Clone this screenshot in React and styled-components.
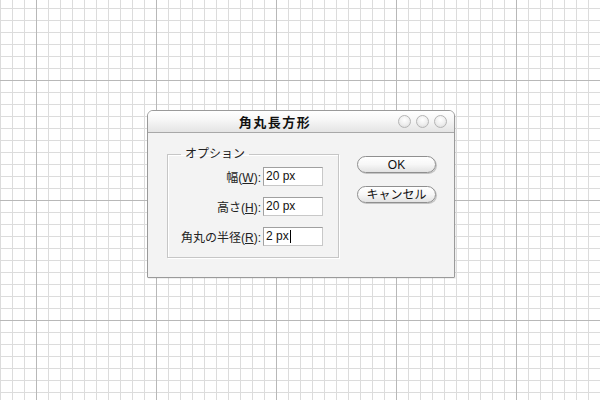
import React from "react";
import styled, { createGlobalStyle } from "styled-components";

const GlobalStyle = createGlobalStyle`
  html, body {
    margin: 0;
    padding: 0;
  }
  body {
    font-family: "Liberation Sans", "Noto Sans CJK JP", sans-serif;
  }
`;

const Canvas = styled.div`
  width: 600px;
  height: 400px;
  box-sizing: border-box;
  padding: 110px 0 0 147px;
  background-color: #fff;
  background-image:
    linear-gradient(to right, #b8b8b8 1px, transparent 1px),
    linear-gradient(to bottom, #b8b8b8 1px, transparent 1px),
    linear-gradient(to right, #dcdcdc 1px, transparent 1px),
    linear-gradient(to bottom, #dcdcdc 1px, transparent 1px);
  background-size: 120px 120px, 120px 120px, 12px 12px, 12px 12px;
  background-position: 36px 0, 0 80px, 0 0, 0 8px;
`;

const Dialog = styled.div`
  width: 308px;
  height: 168px;
  box-sizing: border-box;
  background: #f3f3f3;
  border: 1px solid #9a9a9a;
  border-radius: 6px 6px 1px 1px;
  box-shadow: 1px 1px 0 rgba(0, 0, 0, 0.06);
  display: flex;
  flex-direction: column;
  overflow: hidden;
`;

const TitleBar = styled.div`
  height: 21px;
  flex: none;
  display: flex;
  align-items: center;
  padding-right: 7px;
  background: linear-gradient(#ffffff, #f6f6f6 45%, #e4e4e4);
  border-bottom: 1px solid #a8a8a8;
`;

const Title = styled.div`
  flex: 1;
  text-align: center;
  padding-left: 4px;
  font-size: 13px;
  font-weight: bold;
  letter-spacing: 1.5px;
  color: #111;
`;

const WindowButtons = styled.div`
  display: flex;
  gap: 5px;
`;

const Dot = styled.span`
  width: 11px;
  height: 11px;
  border-radius: 50%;
  border: 1px solid #b4b4b4;
  background: radial-gradient(circle at 50% 35%, #ffffff, #eeeeee 55%, #d6d6d6);
`;

const Body = styled.div`
  flex: 1;
  display: flex;
  align-items: flex-start;
  padding: 15px 0 0 19px;
  gap: 18px;
`;

const GroupBox = styled.fieldset`
  width: 172px;
  height: 110px;
  box-sizing: border-box;
  margin: 0;
  padding: 6px 15px 0 8px;
  border: 1px solid #c6c6c6;
  box-shadow: inset 1px 1px 0 #ffffff, 1px 1px 0 #ffffff;
  display: grid;
  grid-template-columns: 1fr 60px;
  grid-auto-rows: 19px;
  row-gap: 11px;
  column-gap: 2px;
  align-items: center;
`;

const Legend = styled.legend`
  margin-left: 5px;
  padding: 0 4px;
  font-size: 12px;
  color: #222;
  line-height: 13px;
`;

const Label = styled.label`
  justify-self: end;
  font-size: 12px;
  color: #222;
  white-space: nowrap;
`;

const Field = styled.div`
  height: 19px;
  box-sizing: border-box;
  background: #fff;
  border: 1px solid #a0a0a0;
  border-right-color: #c8c8c8;
  border-bottom-color: #c8c8c8;
  font-size: 12px;
  line-height: 17px;
  padding-left: 2px;
  color: #111;
  display: flex;
  align-items: center;
`;

const Caret = styled.span`
  width: 1px;
  height: 13px;
  margin-left: 1px;
  background: #000;
`;

const Buttons = styled.div`
  display: flex;
  flex-direction: column;
  gap: 13px;
  margin-top: 8px;
`;

const Button = styled.button`
  width: 79px;
  height: 17px;
  padding: 0;
  border: 1px solid #8f8f8f;
  border-radius: 9px;
  background: linear-gradient(#ffffff, #f7f7f7 50%, #e2e2e2);
  box-shadow: 1px 1px 0 #c4c4c4;
  font-family: "Liberation Sans", "Noto Sans CJK JP", sans-serif;
  font-size: 12px;
  line-height: 14px;
  color: #111;
`;

const fields = [
  { label: "幅", key: "W", value: "20 px" },
  { label: "高さ", key: "H", value: "20 px" },
  { label: "角丸の半径", key: "R", value: "2 px", active: true },
];

export default function App() {
  return (
    <>
      <GlobalStyle />
      <Canvas>
        <Dialog>
          <TitleBar>
            <Title>角丸長方形</Title>
            <WindowButtons>
              <Dot />
              <Dot />
              <Dot />
            </WindowButtons>
          </TitleBar>
          <Body>
            <GroupBox>
              <Legend>オプション</Legend>
              {fields.map((f) => (
                <React.Fragment key={f.key}>
                  <Label>
                    {f.label}(<u>{f.key}</u>):
                  </Label>
                  <Field>
                    {f.value}
                    {f.active && <Caret />}
                  </Field>
                </React.Fragment>
              ))}
            </GroupBox>
            <Buttons>
              <Button>OK</Button>
              <Button>キャンセル</Button>
            </Buttons>
          </Body>
        </Dialog>
      </Canvas>
    </>
  );
}
